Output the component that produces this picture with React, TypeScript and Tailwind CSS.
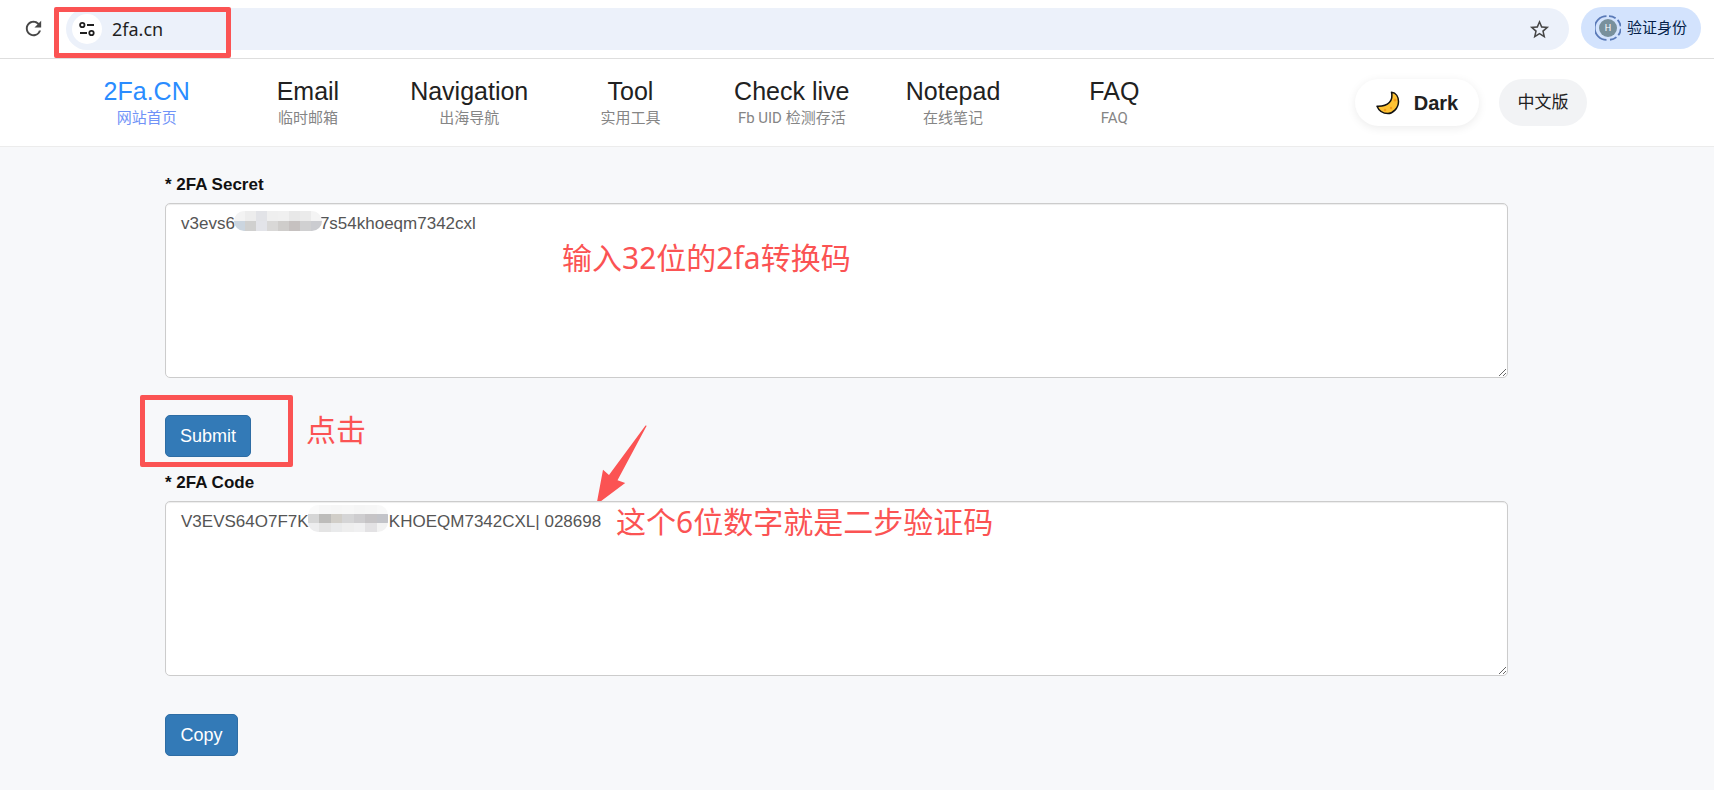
import { useState } from "react";
import clsx from "clsx";
import { MdRefresh, MdStarBorder } from "react-icons/md";

const NAV_ITEMS = [
  { title: "2Fa.CN", subtitle: "网站首页" },
  { title: "Email", subtitle: "临时邮箱" },
  { title: "Navigation", subtitle: "出海导航" },
  { title: "Tool", subtitle: "实用工具" },
  { title: "Check live", subtitle: "Fb UID 检测存活" },
  { title: "Notepad", subtitle: "在线笔记" },
  { title: "FAQ", subtitle: "FAQ" },
];

const TuneIcon = () => (
  <svg width="18" height="18" viewBox="0 0 18 18" fill="none" stroke="#1f1f1f" strokeWidth="1.8">
    <circle cx="4.3" cy="5" r="2.2" />
    <path d="M9 5h7M2 13h7" />
    <circle cx="13.5" cy="13" r="2.2" />
  </svg>
);

const ProfileIcon = () => (
  <svg width="26" height="26" viewBox="0 0 26 26">
    <circle cx="13" cy="13" r="9" fill="#78909c" />
    <g fill="none" stroke="#5a7ab8" strokeWidth="1.8">
      <path d="M11.5 1.2A11.8 11.8 0 0 0 11.5 24.8" />
      <path d="M14 1.2A11.8 11.8 0 0 1 14 24.8" strokeDasharray="7 2.6" />
    </g>
    <text x="13" y="16.2" textAnchor="middle" fontSize="9" fill="#fff" fontFamily="Roboto, sans-serif">
      H
    </text>
  </svg>
);

const MoonIcon = () => (
  <svg width="24" height="24" viewBox="0 0 24 24">
    <path
      d="M15.5 1.2C17.5 9.7 12.5 15.7 1 15.2C3 20 7 22.5 12 22.5C16.5 22.5 22.5 17.5 22.5 10.5C22.5 6 20.2 1.7 15.5 1.2Z"
      fill="#fdc233"
      stroke="#111"
      strokeWidth="1.5"
      strokeLinejoin="round"
    />
    <circle cx="19" cy="9" r="1.5" fill="#f79a1c" />
    <circle cx="15" cy="17" r="1.2" fill="#f79a1c" />
    <circle cx="9" cy="19" r="1.3" fill="#f79a1c" />
  </svg>
);

const BrowserBar = () => {
  const [address, setAddress] = useState("2fa.cn");
  return (
    <div className="flex h-[59px] items-start border-b border-[#dedede] bg-white pr-[13px] pl-[22px]">
      <button type="button" aria-label="Reload" className="mt-[17px] text-[#474747]">
        <MdRefresh size={23} />
      </button>
      <div className="relative mt-2 ml-[21px] flex h-[42px] flex-1 items-center rounded-full bg-[#ecf1fa] pr-[18px] pl-1.5">
        <span className="flex size-[30px] shrink-0 items-center justify-center rounded-full bg-white">
          <TuneIcon />
        </span>
        <input
          aria-label="Address"
          value={address}
          onChange={(e) => setAddress(e.target.value)}
          className="ml-2.5 min-w-0 flex-1 bg-transparent font-['Noto_Sans','Noto_Sans_CJK_SC',sans-serif] text-[18px] text-[#1f1f1f] outline-none"
        />
        <button type="button" aria-label="Bookmark" className="text-[#474747]">
          <MdStarBorder size={23} />
        </button>
        <span className="pointer-events-none absolute -top-px -left-3 h-[51px] w-[177px] rounded-xs border-5 border-[#fb5353]" />
      </div>
      <button
        type="button"
        className="mt-[7px] ml-3 flex h-[42px] w-[120px] items-center justify-center gap-1.5 rounded-full bg-[#d3e3fd] text-[15px] text-[#041e49]"
      >
        <ProfileIcon />
        验证身份
      </button>
    </div>
  );
};

const Header = () => (
  <header className="flex h-[88px] items-start border-b border-[#ececec] bg-white pr-[127px] pl-[66px]">
    <nav className="mr-40 grid flex-1 grid-cols-7 pt-4 text-center">
      {NAV_ITEMS.map(({ title, subtitle }, i) => (
        <a key={title} href="#" className="whitespace-nowrap">
          <span
            className={clsx(
              "block text-[25px] leading-8",
              i === 0 ? "text-[#2a8cff]" : "text-[#212121]",
            )}
          >
            {title}
          </span>
          <span
            className={clsx(
              "block font-['Roboto','Noto_Sans_CJK_SC',sans-serif] text-[15px] leading-[22px]",
              i === 0 ? "text-[#7193f7]" : "text-[#858585]",
            )}
          >
            {subtitle}
          </span>
        </a>
      ))}
    </nav>
    <button
      type="button"
      className="mt-5 flex h-[47px] w-[124px] items-center justify-center gap-3.5 rounded-full bg-white text-[20px] font-bold text-[#212121] shadow-[0_2px_10px_rgba(0,0,0,0.08)]"
    >
      <MoonIcon />
      Dark
    </button>
    <button
      type="button"
      className="mt-5 ml-5 h-[47px] w-[88px] rounded-full bg-[#f2f3f5] text-[17px] text-[#212121]"
    >
      中文版
    </button>
  </header>
);

const Note = ({ className, children }: { className: string; children: string }) => (
  <p
    className={clsx(
      "pointer-events-none absolute font-['Noto_Sans','Noto_Sans_CJK_SC',sans-serif] text-[30px] leading-[38px] whitespace-nowrap text-[#fb5353]",
      className,
    )}
  >
    {children}
  </p>
);

const Mosaic = ({ rows, className }: { rows: string[][]; className: string }) => (
  <svg
    viewBox={`0 0 ${rows[0].length * 10} ${rows.length * 10}`}
    preserveAspectRatio="none"
    shapeRendering="crispEdges"
    className={clsx("pointer-events-none absolute rounded-[10px]", className)}
  >
    {rows.map((row, y) =>
      row.map((fill, x) => (
        <rect key={`${x}-${y}`} x={x * 10} y={y * 10} width="10" height="10" fill={fill} />
      )),
    )}
  </svg>
);

const SECRET_MOSAIC = [
  ["#f3f3f3", "#ededed", "#e2e3e7", "#efefef", "#f0f0f0", "#e8e8e8", "#ebebeb", "#f4f4f4"],
  ["#cbd5df", "#d0d0cf", "#e3e4e9", "#d9d8d7", "#cfcdcb", "#c6c1c0", "#d0d0d1", "#cbccd0"],
];

const CODE_MOSAIC = [
  ["#fafafa", "#f7f7f7", "#f6f6f6", "#f7f7f7", "#f5f5f5", "#f6f6f6", "#f8f8f8"],
  ["#d6d6d6", "#bdbcba", "#d1cec8", "#d5d5d6", "#cecdcf", "#c6c4c6", "#c3c4c9"],
  ["#ededee", "#e4e4e4", "#e9eaeb", "#eeeeee", "#f0f0f1", "#e3e2e4", "#f2f2f2"],
];

const fieldClass =
  "block h-[175px] w-full resize-y rounded-[5px] border border-[#ccc] bg-white px-[15px] py-[7px] text-[17px] leading-[25px] text-[#555] shadow-[inset_0_1px_1px_rgba(0,0,0,0.075)] outline-none";

const labelClass = "block text-[17px] leading-[25px] font-bold text-[#111]";

const buttonClass =
  "h-[42px] rounded-[5px] border border-[#2e6da4] bg-[#337ab7] text-[18px] text-white";

const App = () => {
  const [secret, setSecret] = useState("v3evs6" + " ".repeat(18) + "7s54khoeqm7342cxl");
  const code = "V3EVS64O7F7K" + " ".repeat(17) + "KHOEQM7342CXL| 028698";

  return (
    <div className="min-h-screen bg-[#f7f8fa] font-['Liberation_Sans','Noto_Sans_CJK_SC',sans-serif]">
      <BrowserBar />
      <Header />
      <main className="pt-[25px] pr-[206px] pb-8 pl-[165px]">
        <label htmlFor="secret" className={labelClass}>
          * 2FA Secret
        </label>
        <div className="relative mt-1.5">
          <textarea
            id="secret"
            spellCheck={false}
            value={secret}
            onChange={(e) => setSecret(e.target.value)}
            className={fieldClass}
          />
          <Mosaic rows={SECRET_MOSAIC} className="top-2 left-[69px] h-5 w-[88px]" />
          <Note className="top-9 left-[397px]">输入32位的2fa转换码</Note>
        </div>
        <div className="relative mt-[37px] flex">
          <button type="button" className={clsx(buttonClass, "w-[86px]")}>
            Submit
          </button>
          <span className="pointer-events-none absolute -top-5 -left-[25px] h-[72px] w-[153px] rounded-xs border-5 border-[#fb5353]" />
          <Note className="-top-1 left-[141px]">点击</Note>
          <svg
            viewBox="0 0 52 80"
            className="pointer-events-none absolute top-2.5 left-[431px] h-20 w-[52px]"
          >
            <path d="M50.7 0.7L49.5 0.5L13 50L7 44.7L0.5 79.5L29.2 58L21.5 55.3Z" fill="#fb5353" />
          </svg>
        </div>
        <label htmlFor="code" className={clsx(labelClass, "mt-[13px]")}>
          * 2FA Code
        </label>
        <div className="relative mt-1.5">
          <textarea id="code" spellCheck={false} readOnly value={code} className={fieldClass} />
          <Mosaic rows={CODE_MOSAIC} className="top-1 left-[143px] h-[27px] w-20" />
          <Note className="top-0.5 left-[451px]">这个6位数字就是二步验证码</Note>
        </div>
        <button
          type="button"
          onClick={() => navigator.clipboard.writeText(code)}
          className={clsx(buttonClass, "mt-[38px] w-[73px]")}
        >
          Copy
        </button>
      </main>
    </div>
  );
};

export default App;
